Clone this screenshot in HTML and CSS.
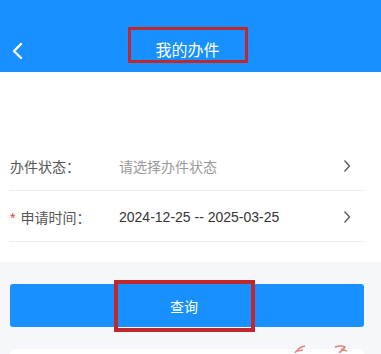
FILE: index.html
```html
<!DOCTYPE html>
<html lang="zh-CN">
<head>
  <meta charset="UTF-8">
  <meta name="viewport" content="width=device-width, initial-scale=1.0">
  <title>我的办件</title>
  <link rel="stylesheet" href="styles.css">
</head>
<body>
  <div class="page">
    <div class="nav-bar">
      <span class="back-btn">
        <svg width="12" height="18" viewBox="0 0 12 18"><path d="M10 2 L3 9 L10 16" fill="none" stroke="#fff" stroke-width="2.4" stroke-linecap="round" stroke-linejoin="round"/></svg>
      </span>
      <div class="nav-title"><span class="mark-box title-box">我的办件</span></div>
    </div>

    <div class="filter-box">
      <div class="form-row">
        <span class="form-label">办件状态：</span>
        <span class="form-value placeholder">请选择办件状态</span>
        <span class="arrow">
          <svg width="8" height="14" viewBox="0 0 8 14"><path d="M1.5 1.5 L6.5 7 L1.5 12.5" fill="none" stroke="#555" stroke-width="1.3"/></svg>
        </span>
      </div>
      <div class="form-row">
        <span class="form-label"><i class="required">*</i>申请时间：</span>
        <span class="form-value">2024-12-25 -- 2025-03-25</span>
        <span class="arrow">
          <svg width="8" height="14" viewBox="0 0 8 14"><path d="M1.5 1.5 L6.5 7 L1.5 12.5" fill="none" stroke="#555" stroke-width="1.3"/></svg>
        </span>
      </div>
    </div>

    <div class="action-area">
      <button class="search-btn"><span class="mark-box btn-box">查询</span></button>
      <div class="result-card">
        <svg class="stamp" width="70" height="8" viewBox="0 0 70 8"><path d="M6 8 Q10 2 16 1 M8 6 L14 5" fill="none" stroke="#d9534f" stroke-width="1.6" opacity="0.7"/><path d="M46 2 Q52 0 56 2 Q54 5 50 8 M52 4 L58 6" fill="none" stroke="#d9534f" stroke-width="1.6" opacity="0.7"/></svg>
      </div>
    </div>
  </div>
</body>
</html>
```

FILE: styles.css
```css
body {
  margin: 0;
  padding: 0;
  font-family: "Liberation Sans", Arial, "Noto Sans CJK SC", sans-serif;
  background-color: #F5F7FA;
}

.page {
  width: 381px;
  height: 354px;
  overflow: hidden;
}

.nav-bar {
  height: 72px;
  background-color: #1890FF;
  display: flex;
  align-items: flex-end;
  position: relative;
}

.back-btn {
  position: absolute;
  left: 11px;
  top: 42px;
  display: flex;
}

.nav-title {
  flex: 1;
  display: flex;
  justify-content: center;
  padding: 0 6px 9px 0;
}

.mark-box {
  border: 3px solid #C0282E;
  box-sizing: border-box;
  display: flex;
  align-items: center;
  justify-content: center;
}

.title-box {
  width: 120px;
  height: 36px;
  color: #FFFFFF;
  font-size: 16px;
  padding-top: 7px;
}

.filter-box {
  background-color: #FFFFFF;
  padding: 68px 16px 20px 10px;
}

.form-row {
  display: flex;
  align-items: center;
  height: 51px;
  border-bottom: 1px solid #EBEDF0;
  font-size: 14px;
  box-sizing: border-box;
  padding-top: 2px;
}

.form-label {
  width: 109px;
  color: #555555;
}

.required {
  font-style: normal;
  color: #E0393E;
  margin-right: 5px;
}

.form-value {
  flex: 1;
  color: #333333;
}

.form-value.placeholder {
  color: #999999;
}

.arrow {
  display: flex;
  margin-right: 14px;
}

.action-area {
  padding: 22px 17px 0 10px;
}

.search-btn {
  width: 100%;
  height: 43px;
  border: none;
  border-radius: 3px;
  background-color: #1890FF;
  display: flex;
  justify-content: center;
  align-items: center;
  padding: 0 6px 0 0;
  font-family: inherit;
}

.btn-box {
  width: 141px;
  height: 52px;
  border-width: 4px;
  color: #FFFFFF;
  font-size: 14px;
}

.result-card {
  margin-top: 22px;
  height: 40px;
  background-color: #FFFFFF;
  border-radius: 6px;
  position: relative;
}

.stamp {
  position: absolute;
  right: 5px;
  top: -4px;
}
```
